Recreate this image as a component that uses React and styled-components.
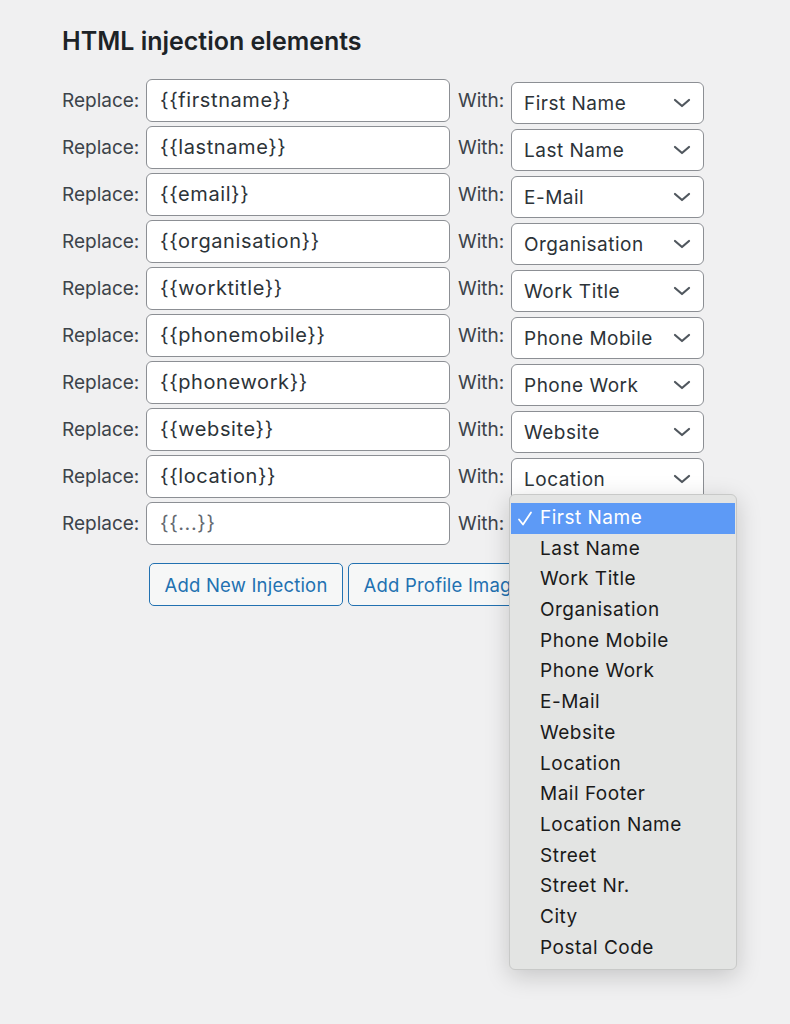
import React from "react";
import styled, { createGlobalStyle } from "styled-components";

const GlobalStyle = createGlobalStyle`
  html, body {
    margin: 0;
    padding: 0;
    background: #f0f0f1;
  }
  body {
    font-family: Inter, "Noto Sans", "Liberation Sans", sans-serif;
    color: #3c434a;
  }
`;

const Page = styled.div`
  width: 790px;
  min-height: 1024px;
  box-sizing: border-box;
  padding: 26px 0 0 62px;
`;

const Title = styled.h2`
  margin: 0 0 23px;
  font-size: 25px;
  line-height: 30px;
  font-weight: 600;
  color: #1d2327;
`;

const Rows = styled.div`
  display: flex;
  flex-direction: column;
  gap: 4px;
`;

const Row = styled.div`
  display: grid;
  grid-template-columns: 84px 304px 8px 53px 193px;
  align-items: start;
  height: 43px;
`;

const Label = styled.span`
  grid-column: ${(p) => p.$col};
  font-size: 19px;
  line-height: 43px;
  color: #3c434a;
  white-space: nowrap;
`;

const TextInput = styled.div`
  grid-column: 2;
  box-sizing: border-box;
  height: 43px;
  padding: 0 13px;
  background: #fff;
  border: 1px solid #8c8f94;
  border-radius: 6px;
  font-size: 20px;
  letter-spacing: 0.6px;
  line-height: 41px;
  color: ${(p) => (p.$placeholder ? "#646970" : "#2c3338")};
`;

const SelectCell = styled.div`
  grid-column: 5;
  position: relative;
  margin-top: 3px;
`;

const Select = styled.div`
  box-sizing: border-box;
  height: 42px;
  display: flex;
  align-items: center;
  justify-content: space-between;
  padding: 0 12px 0 12px;
  background: #fff;
  border: 1px solid #8c8f94;
  border-radius: 6px;
  font-size: 19px;
  letter-spacing: 0.5px;
  color: #2c3338;
`;

const Chevron = () => (
  <svg width="18" height="12" viewBox="0 0 18 12" fill="none">
    <path d="M2 3l7 6 7-6" stroke="#50575e" strokeWidth="2.2" strokeLinecap="round" strokeLinejoin="round" />
  </svg>
);

const Actions = styled.div`
  display: flex;
  gap: 5px;
  margin: 18px 0 0 87px;
`;

const Button = styled.button`
  box-sizing: border-box;
  height: 43px;
  padding: 0 14.5px;
  background: #f6f7f7;
  border: 1px solid #2271b1;
  border-radius: 5px;
  color: #2271b1;
  font-family: inherit;
  font-size: 18.5px;
  letter-spacing: 0.2px;
  white-space: nowrap;
`;

const Menu = styled.ul`
  position: absolute;
  left: -2px;
  top: -11px;
  width: 228px;
  margin: 0;
  padding: 8px 1px 6px;
  list-style: none;
  box-sizing: border-box;
  background: #e3e4e3;
  border: 1px solid #c8c9c8;
  border-radius: 6px;
  box-shadow: 0 6px 24px rgba(0, 0, 0, 0.18);
  z-index: 10;
`;

const MenuItem = styled.li`
  position: relative;
  height: 30.7px;
  line-height: 30.7px;
  padding-left: 29px;
  font-size: 19px;
  letter-spacing: 0.5px;
  color: ${(p) => (p.$active ? "#fff" : "#1a1a1a")};
  background: ${(p) => (p.$active ? "#5d9af6" : "transparent")};
`;

const Check = () => (
  <svg
    width="16"
    height="16"
    viewBox="0 0 16 16"
    fill="none"
    style={{ position: "absolute", left: 6, top: 8 }}
  >
    <path d="M2 8.5l4 5L14 1.5" stroke="#fff" strokeWidth="1.8" strokeLinecap="round" strokeLinejoin="round" />
  </svg>
);

const rows = [
  ["{{firstname}}", "First Name"],
  ["{{lastname}}", "Last Name"],
  ["{{email}}", "E-Mail"],
  ["{{organisation}}", "Organisation"],
  ["{{worktitle}}", "Work Title"],
  ["{{phonemobile}}", "Phone Mobile"],
  ["{{phonework}}", "Phone Work"],
  ["{{website}}", "Website"],
  ["{{location}}", "Location"],
];

const options = [
  "First Name",
  "Last Name",
  "Work Title",
  "Organisation",
  "Phone Mobile",
  "Phone Work",
  "E-Mail",
  "Website",
  "Location",
  "Mail Footer",
  "Location Name",
  "Street",
  "Street Nr.",
  "City",
  "Postal Code",
];

const App = () => {
  return (
    <Page>
      <GlobalStyle />
      <Title>HTML injection elements</Title>
      <Rows>
        {rows.map(([key, value]) => (
          <Row key={key}>
            <Label $col={1}>Replace:</Label>
            <TextInput>{key}</TextInput>
            <Label $col={4}>With:</Label>
            <SelectCell>
              <Select>
                {value}
                <Chevron />
              </Select>
            </SelectCell>
          </Row>
        ))}
        <Row>
          <Label $col={1}>Replace:</Label>
          <TextInput $placeholder>{"{{...}}"}</TextInput>
          <Label $col={4}>With:</Label>
          <SelectCell>
            <Select>
              First Name
              <Chevron />
            </Select>
            <Menu>
              {options.map((opt, idx) => (
                <MenuItem key={opt} $active={idx === 0}>
                  {idx === 0 ? <Check /> : null}
                  {opt}
                </MenuItem>
              ))}
            </Menu>
          </SelectCell>
        </Row>
      </Rows>
      <Actions>
        <Button>Add New Injection</Button>
        <Button>Add Profile Image</Button>
      </Actions>
    </Page>
  );
};

export default App;
